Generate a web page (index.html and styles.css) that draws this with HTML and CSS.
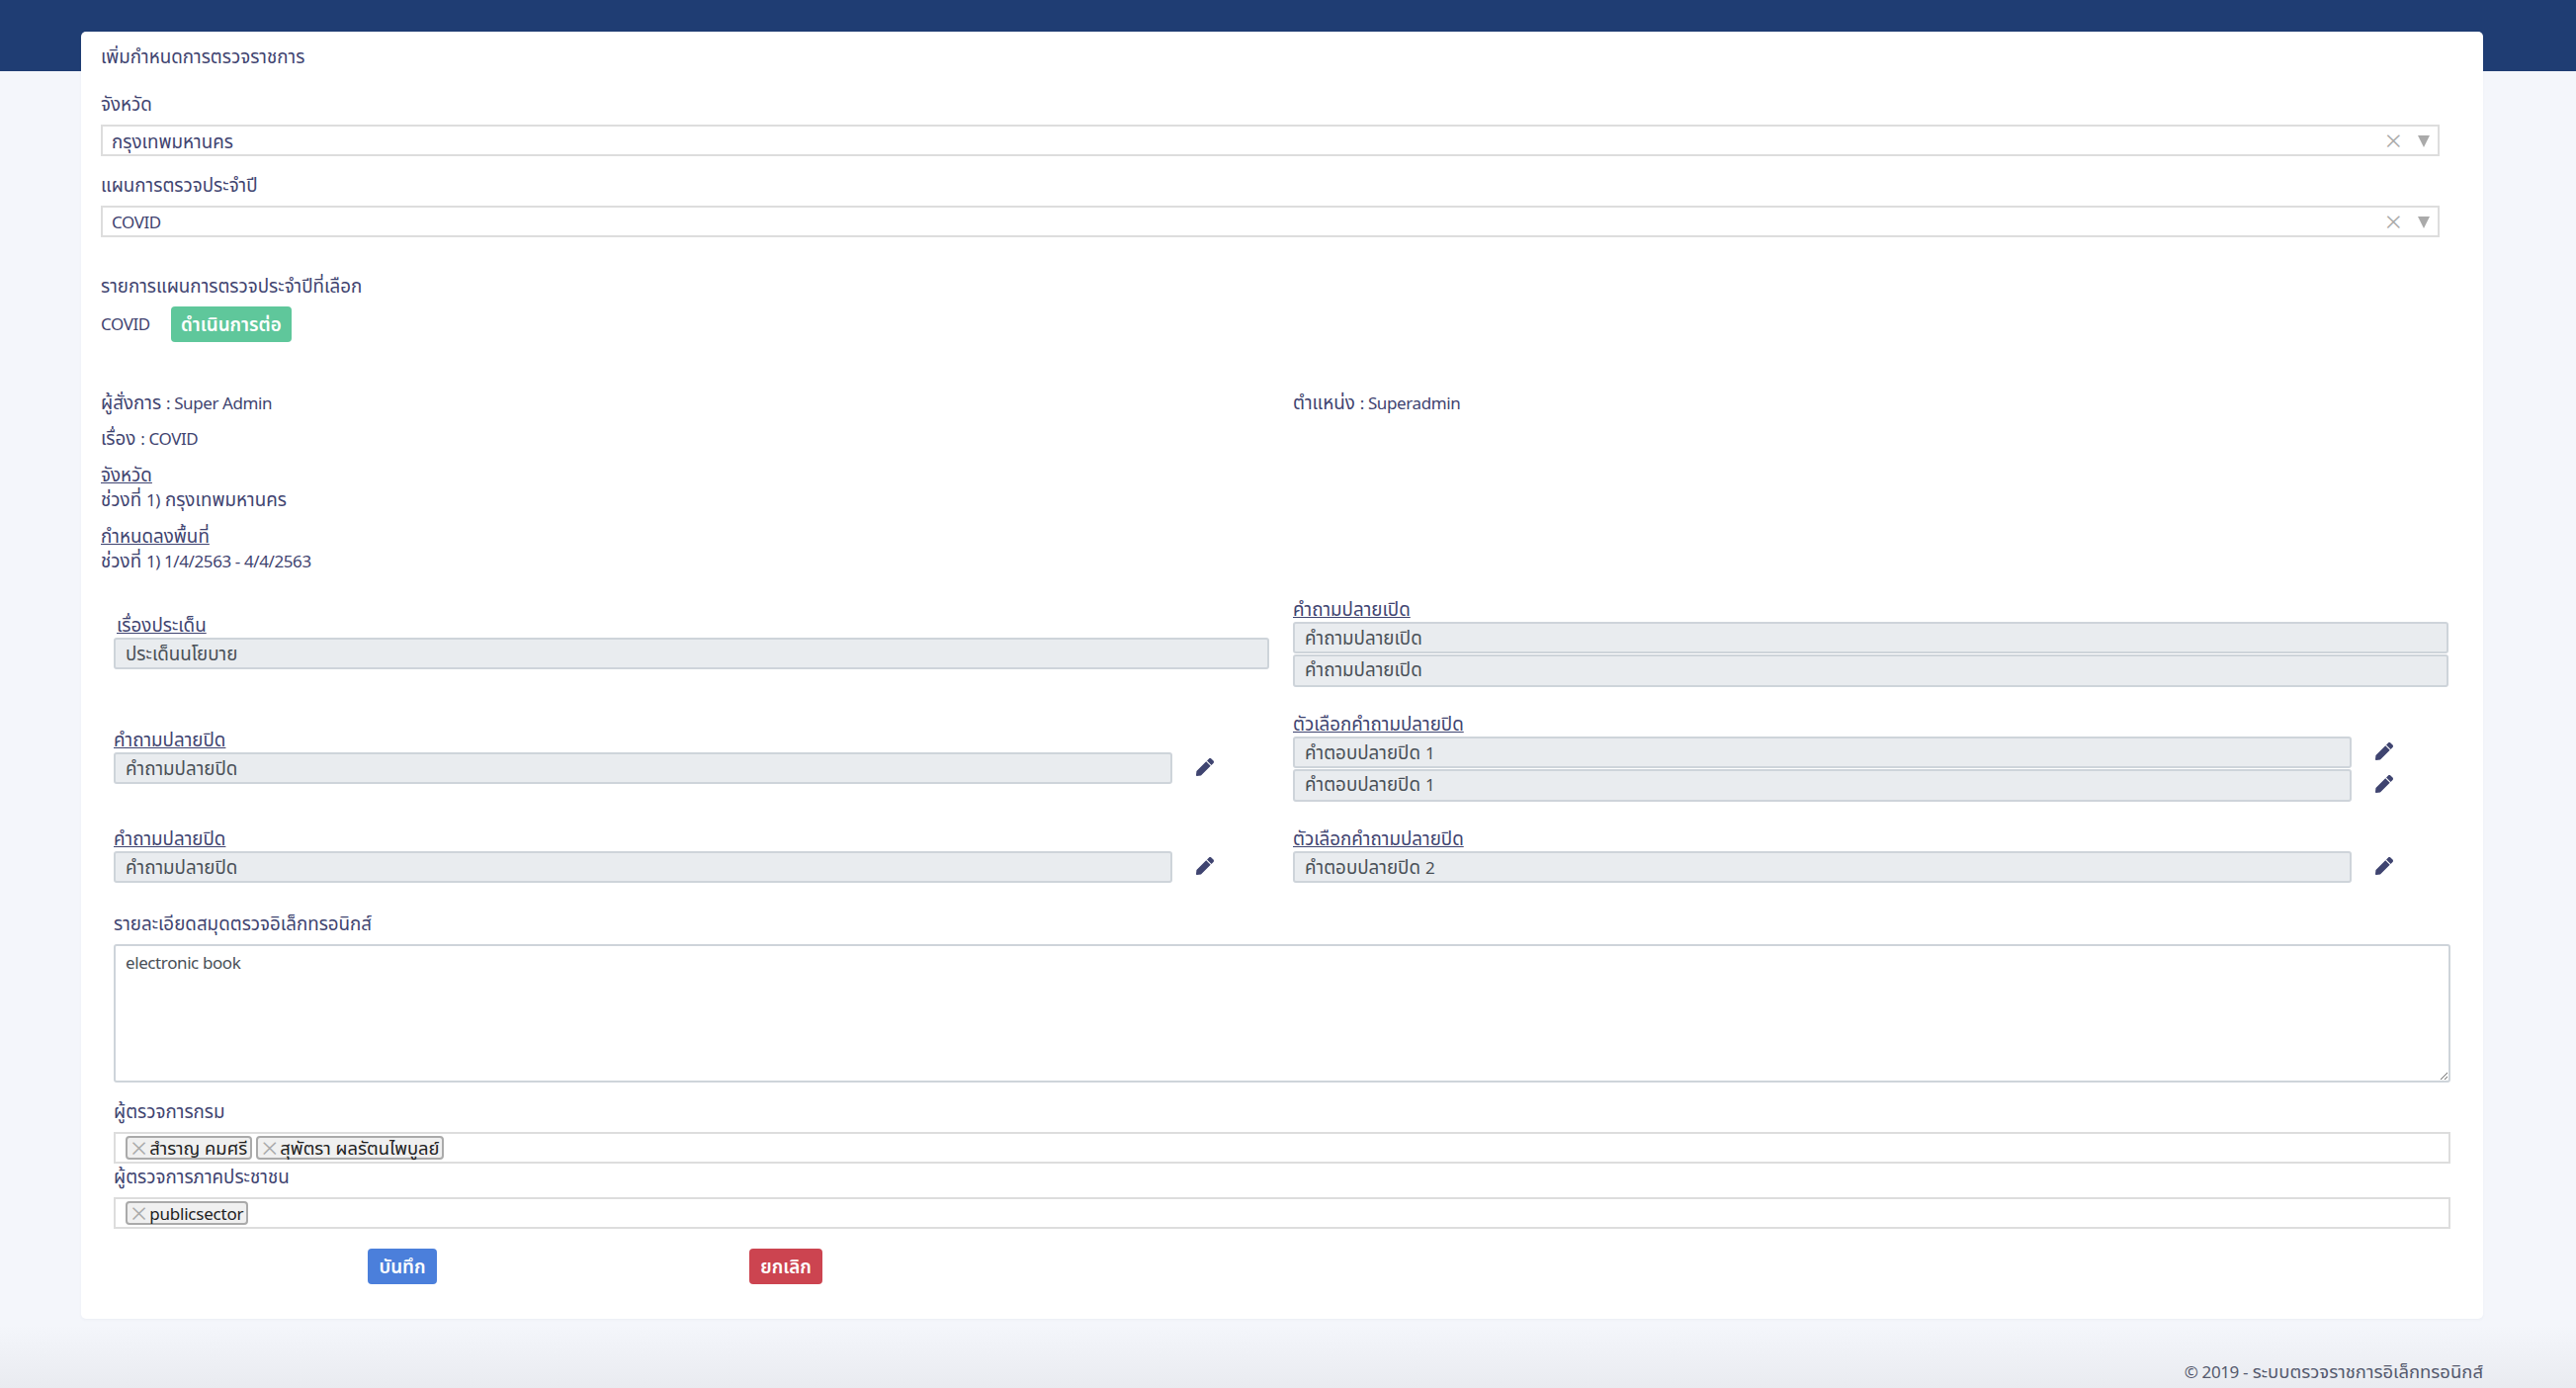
FILE: index.html
```html
<!DOCTYPE html>
<html>
<head>
  <title>เพิ่มกำหนดการตรวจราชการ</title>
  <meta name="viewport" content="width=device-width, initial-scale=1">
  <link rel="stylesheet" href="styles.css">
</head>

<body>

  <svg class="defs">
    <symbol id="pen" viewBox="0 0 512 512">
      <path d="M290.74 93.24l128.02 128.02-277.99 277.99-114.14 12.6C11.35 513.54-1.56 500.62.14 485.34l12.7-114.22 277.9-277.88zm207.2-19.06l-60.11-60.11c-18.75-18.75-49.16-18.75-67.91 0l-56.55 56.55 128.02 128.02 56.55-56.55c18.75-18.76 18.75-49.16 0-67.91z"/>
    </symbol>
  </svg>

  <header class="topbar"></header>

  <main class="card">
    <div class="line title">เพิ่มกำหนดการตรวจราชการ</div>

    <label class="line field-label first">จังหวัด</label>
    <div class="select">
      <span class="select-value">กรุงเทพมหานคร</span>
      <span class="select-clear">×</span>
      <span class="select-arrow"></span>
    </div>

    <label class="line field-label">แผนการตรวจประจำปี</label>
    <div class="select">
      <span class="select-value en">COVID</span>
      <span class="select-clear">×</span>
      <span class="select-arrow"></span>
    </div>

    <div class="line picked-title">รายการแผนการตรวจประจำปีที่เลือก</div>
    <div class="picked">
      <span class="en">COVID</span>
      <a class="btn btn-green">ดำเนินการต่อ</a>
    </div>

    <div class="summary">
      <div class="line">ผู้สั่งการ <span class="en">: Super Admin</span></div>
      <div class="line">ตำแหน่ง <span class="en">: Superadmin</span></div>
    </div>
    <div class="line subject">เรื่อง <span class="en">: COVID</span></div>
    <div class="line heading"><u>จังหวัด</u></div>
    <div class="line">ช่วงที่ <span class="en">1)</span> กรุงเทพมหานคร</div>
    <div class="line heading"><u>กำหนดลงพื้นที่</u></div>
    <div class="line">ช่วงที่ <span class="en">1) 1/4/2563 - 4/4/2563</span></div>

    <form class="details">
      <div class="grid">
        <div class="cell-left">
          <div class="line issue-label"><u>เรื่องประเด็น</u></div>
          <div class="readonly">ประเด็นนโยบาย</div>
        </div>
        <div>
          <div class="line"><u>คำถามปลายเปิด</u></div>
          <div class="readonly">คำถามปลายเปิด</div>
          <div class="readonly next">คำถามปลายเปิด</div>
        </div>

        <div class="cell-left">
          <div class="line"><u>คำถามปลายปิด</u></div>
          <div class="edit-row">
            <div class="readonly">คำถามปลายปิด</div>
            <svg class="pen"><use href="#pen"/></svg>
          </div>
        </div>
        <div>
          <div class="line"><u>ตัวเลือกคำถามปลายปิด</u></div>
          <div class="edit-row">
            <div class="readonly">คำตอบปลายปิด <span class="en">1</span></div>
            <svg class="pen"><use href="#pen"/></svg>
          </div>
          <div class="edit-row">
            <div class="readonly next">คำตอบปลายปิด <span class="en">1</span></div>
            <svg class="pen"><use href="#pen"/></svg>
          </div>
        </div>

        <div>
          <div class="line"><u>คำถามปลายปิด</u></div>
          <div class="edit-row">
            <div class="readonly">คำถามปลายปิด</div>
            <svg class="pen"><use href="#pen"/></svg>
          </div>
        </div>
        <div>
          <div class="line"><u>ตัวเลือกคำถามปลายปิด</u></div>
          <div class="edit-row">
            <div class="readonly">คำตอบปลายปิด <span class="en">2</span></div>
            <svg class="pen"><use href="#pen"/></svg>
          </div>
        </div>
      </div>

      <label class="line book-label">รายละเอียดสมุดตรวจอิเล็กทรอนิกส์</label>
      <textarea class="book">electronic book</textarea>

      <label class="line people-label">ผู้ตรวจการกรม</label>
      <div class="tags">
        <span class="tag"><i>×</i>สำราญ คมศรี</span>
        <span class="tag"><i>×</i>สุพัตรา ผลรัตนไพบูลย์</span>
      </div>
      <label class="line people-label second">ผู้ตรวจการภาคประชาชน</label>
      <div class="tags">
        <span class="tag"><i>×</i><span class="en">publicsector</span></span>
      </div>

      <div class="actions">
        <a class="btn btn-blue">บันทึก</a>
        <a class="btn btn-red">ยกเลิก</a>
      </div>
    </form>
  </main>

  <footer class="foot"><span class="en">© 2019 -</span> ระบบตรวจราชการอิเล็กทรอนิกส์</footer>

</body>

</html>
```

FILE: styles.css
```css
html {
  height: 100%;
}

body {
  margin: 0;
  height: 1404px;
  overflow: hidden;
  position: relative;
  font-family: "Noto Sans", "Noto Sans Thai", "Open Sans", sans-serif;
  font-size: 18.8px;
  color: #3f4470;
  background: linear-gradient(#f4f6fb 0, #f4f6fb 1340px, #e9ebf0 1404px);
}

/* the thai glyphs run small, so latin runs get their own size */
.en {
  font-size: 17px;
  letter-spacing: -.4px;
}

.defs {
  display: none;
}

.topbar {
  height: 72px;
  background: #1f3d73;
}

.card {
  position: absolute;
  left: 82px;
  top: 32px;
  width: 2430px;
  height: 1302px;
  box-sizing: border-box;
  padding: 13px 0 0 20px;
  background: #fff;
  border-radius: 5px;
  box-shadow: 0 1px 3px rgba(60, 70, 120, .05);
}

.line {
  display: block;
  height: 24px;
  line-height: 22px;
  white-space: nowrap;
}

.title {
  line-height: 24px;
}

u {
  text-underline-offset: 1px;
}

.field-label {
  margin: 17px 0 9px;
  line-height: 24px;
}

.field-label.first {
  margin-top: 24px;
}

.select {
  width: 2366px;
  height: 32px;
  box-sizing: border-box;
  display: flex;
  align-items: center;
  padding: 4px 0 0 9px;
  border: 2px solid #ddd;
}

.select-value {
  flex: 1;
}

.select-value.en {
  margin-top: -3px;
}

.select-clear {
  color: #aaa;
  font-size: 30px;
  line-height: 26px;
  font-weight: 300;
  margin: -4px 16px 0 0;
}

.select-arrow {
  width: 0;
  height: 0;
  margin: -2px 8px 0 0;
  border-left: 6px solid transparent;
  border-right: 6px solid transparent;
  border-top: 12px solid #aaa;
}

.picked-title {
  margin-top: 38px;
}

.picked {
  display: flex;
  align-items: center;
  gap: 21px;
  margin-top: 8px;
}

.picked .en {
  margin-top: -2px;
}

.btn {
  display: inline-block;
  height: 36px;
  line-height: 36px;
  box-sizing: border-box;
  border-radius: 4px;
  color: #fff;
  font-weight: 600;
  text-align: center;
}

.btn-green {
  width: 122px;
  background: #5fc79b;
}

.btn-blue {
  width: 70px;
  background: #4b7fdb;
}

.btn-red {
  width: 74px;
  background: #cc4450;
}

.summary {
  display: grid;
  grid-template-columns: 1206px 1fr;
  margin-top: 50px;
}

.subject {
  margin-top: 12px;
}

.heading {
  margin-top: 13px;
  height: 25px;
}

.details {
  margin: 25px 0 0 13px;
  width: 2364px;
}

.grid {
  display: grid;
  grid-template-columns: 1169px 1169px;
  column-gap: 24px;
  row-gap: 26px;
  align-items: start;
}

.cell-left {
  padding-top: 16px;
}

.issue-label {
  padding-left: 3px;
}

.readonly {
  flex: 1;
  height: 32px;
  line-height: 28px;
  box-sizing: border-box;
  padding: 0 10px;
  background: #e9ecef;
  border: 2px solid #ced4da;
  border-radius: 3px;
  color: #495057;
}

.readonly.next {
  margin-top: 1px;
  height: 33px;
  line-height: 26px;
}

.edit-row {
  display: flex;
  align-items: center;
}

.pen {
  width: 18px;
  height: 18px;
  flex: none;
  margin: -3px 56px 0 24px;
  fill: #3f4470;
}

.book-label {
  margin: 30px 0 8px;
}

.book {
  display: block;
  width: 100%;
  height: 140px;
  box-sizing: border-box;
  padding: 5px 10px;
  background: #fff;
  border: 2px solid #ced4da;
  border-radius: 3px;
  color: #495057;
  font: inherit;
  font-size: 17px;
  letter-spacing: -.4px;
  line-height: 24px;
  outline: 0;
}

.people-label {
  margin: 18px 0 8px;
}

.people-label.second {
  margin: 2px 0 8px;
}

.tags {
  height: 32px;
  box-sizing: border-box;
  display: flex;
  align-items: center;
  gap: 4px;
  padding-left: 10px;
  border: 2px solid #ddd;
}

.tag {
  height: 24px;
  line-height: 20px;
  box-sizing: border-box;
  padding: 0 3px;
  background: #f0f0f0;
  border: 2px solid #aaa;
  border-radius: 4px;
  color: #222;
  font-size: 18.4px;
  white-space: nowrap;
}

.tag .en {
  font-size: 17px;
  letter-spacing: -.2px;
}

.tag i {
  color: #aaa;
  font-style: normal;
  font-size: 30px;
  font-weight: 300;
  line-height: 18px;
  vertical-align: -4px;
  margin-right: 2px;
}

.actions {
  display: flex;
  margin: 20px 0 0 257px;
  gap: 316px;
}

.foot {
  position: absolute;
  right: 94px;
  top: 1375px;
  height: 24px;
  line-height: 24px;
  font-size: 18.5px;
  color: #555a6e;
}
```
